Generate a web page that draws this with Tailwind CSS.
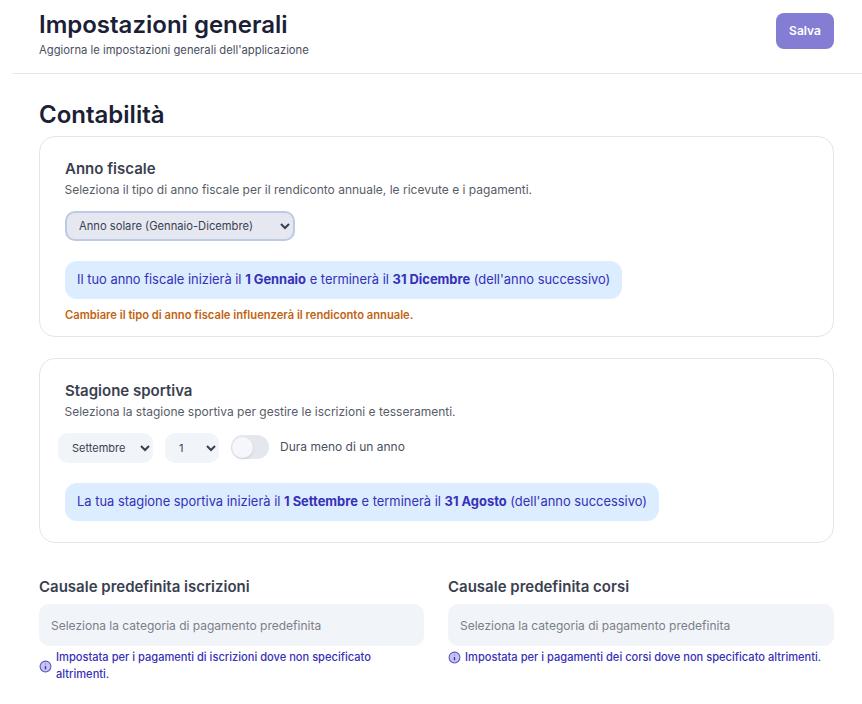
<!doctype html>
<html lang="it">
<head>
<meta charset="utf-8">
<title>Impostazioni generali</title>
<script src="https://cdn.jsdelivr.net/npm/@tailwindcss/browser@4"></script>
</head>
<body class="bg-white font-['Inter',sans-serif] text-[#1f2937]">
<div class="w-[862px] h-[704px] overflow-hidden pl-3">
  <header class="h-[74px] border-b border-[#e7e8ee] pl-[27px] pr-[28px] flex justify-between items-start">
    <div class="pt-[9px]">
      <h1 class="text-2xl leading-[32px] font-semibold text-[#1a2035]">Impostazioni generali</h1>
      <p class="text-[11.25px] leading-4 mt-[1px] text-[#4a4f5e]">Aggiorna le impostazioni generali dell'applicazione</p>
    </div>
    <button class="mt-[13px] w-[58px] h-[36px] rounded-lg bg-[#837dd3] text-white text-xs font-semibold">Salva</button>
  </header>
  <main class="pl-[27px] pr-[28px]">
    <h2 class="mt-[25px] text-2xl leading-8 font-semibold text-[#1a2035]">Contabilità</h2>
    <section class="mt-[5px] h-[201px] border border-[#e4e4f0] rounded-2xl pl-[25px] pt-[22px]">
      <h3 class="text-[15px] leading-5 font-semibold text-[#3a3f50]">Anno fiscale</h3>
      <p class="text-xs leading-4 mt-[3px] -ml-[0.5px] text-[#585c68]">Seleziona il tipo di anno fiscale per il rendiconto annuale, le ricevute e i pagamenti.</p>
      <select class="block mt-[13px] w-[230px] h-[30px] pl-2 rounded-[10px] border-2 border-[#bccbe2] bg-[#e5e8f1] text-[11.2px] text-[#3a3f50]">
        <option>Anno solare (Gennaio-Dicembre)</option>
      </select>
      <div class="mt-[20px] w-fit h-[38px] flex items-center px-3 rounded-xl bg-[#dcedff] text-[12.9px] text-[#3730b8]">
        <p>Il tuo anno fiscale inizierà il <strong class="font-bold">1 Gennaio</strong> e terminerà il <strong class="font-bold">31 Dicembre</strong> (dell'anno successivo)</p>
      </div>
      <p class="mt-[9px] text-[11.2px] leading-[14px] font-semibold text-[#c2630f]">Cambiare il tipo di anno fiscale influenzerà il rendiconto annuale.</p>
    </section>
    <section class="mt-[21px] h-[185px] border border-[#e4e4f0] rounded-2xl pl-[25px] pt-[22px]">
      <h3 class="text-[15px] leading-5 font-semibold text-[#3a3f50]">Stagione sportiva</h3>
      <p class="text-xs leading-4 mt-[3px] -ml-[0.5px] text-[#585c68]">Seleziona la stagione sportiva per gestire le iscrizioni e tesseramenti.</p>
      <div class="mt-[13px] -ml-[7px] flex items-center gap-3">
        <select class="w-[95px] h-[30px] pl-[10px] rounded-[10px] bg-[#f1f4f8] text-[11px] text-[#3a3f50]"><option>Settembre</option></select>
        <select class="w-[54px] h-[30px] pl-[10px] rounded-[10px] bg-[#f1f4f8] text-[11px] text-[#3a3f50]"><option>1</option></select>
        <div class="w-[38px] h-6 rounded-full bg-[#e5e7ef] flex items-center -mt-[2px] pl-[1px]"><span class="block size-[21px] rounded-full bg-[#f6f7fa] shadow-sm"></span></div>
        <span class="text-xs -mt-[2px] -ml-[1px] text-[#4a4f5e]">Dura meno di un anno</span>
      </div>
      <div class="mt-[20px] w-fit h-[38px] flex items-center px-3 rounded-xl bg-[#dcedff] text-[12.92px] text-[#3730b8]">
        <p>La tua stagione sportiva inizierà il <strong class="font-bold">1 Settembre</strong> e terminerà il <strong class="font-bold">31 Agosto</strong> (dell'anno successivo)</p>
      </div>
    </section>
    <div class="mt-[34px] grid grid-cols-[385px_386px] gap-6">
      <div>
        <h3 class="text-[15px] leading-5 font-semibold text-[#3a3f50]">Causale predefinita iscrizioni</h3>
        <div class="mt-[7px] h-[42px] rounded-[10px] bg-[#f1f4f8] flex items-center px-3 pt-[1px] text-xs text-[#7b7f8a]">Seleziona la categoria di pagamento predefinita</div>
        <div class="mt-[3px] flex items-center gap-[4px] text-[11.1px] leading-[17px] font-medium text-[#3730b8]">
          <svg class="w-[13px] h-[13px] shrink-0" viewBox="0 0 24 24"><circle cx="12" cy="12" r="10" fill="#c7c5ee" stroke="#5a54c8" stroke-width="2"/><path d="M12 11v6M12 7v1" stroke="#3730b8" stroke-width="2.5" fill="none"/></svg>
          <p>Impostata per i pagamenti di iscrizioni dove non specificato altrimenti.</p>
        </div>
      </div>
      <div>
        <h3 class="text-[15px] leading-5 font-semibold text-[#3a3f50]">Causale predefinita corsi</h3>
        <div class="mt-[7px] h-[42px] rounded-[10px] bg-[#f1f4f8] flex items-center px-3 pt-[1px] text-xs text-[#7b7f8a]">Seleziona la categoria di pagamento predefinita</div>
        <div class="mt-[3px] flex items-center gap-[4px] text-[11.1px] leading-[17px] font-medium text-[#3730b8]">
          <svg class="w-[13px] h-[13px] shrink-0" viewBox="0 0 24 24"><circle cx="12" cy="12" r="10" fill="#c7c5ee" stroke="#5a54c8" stroke-width="2"/><path d="M12 11v6M12 7v1" stroke="#3730b8" stroke-width="2.5" fill="none"/></svg>
          <p>Impostata per i pagamenti dei corsi dove non specificato altrimenti.</p>
        </div>
      </div>
    </div>
  </main>
</div>
</body>
</html>
